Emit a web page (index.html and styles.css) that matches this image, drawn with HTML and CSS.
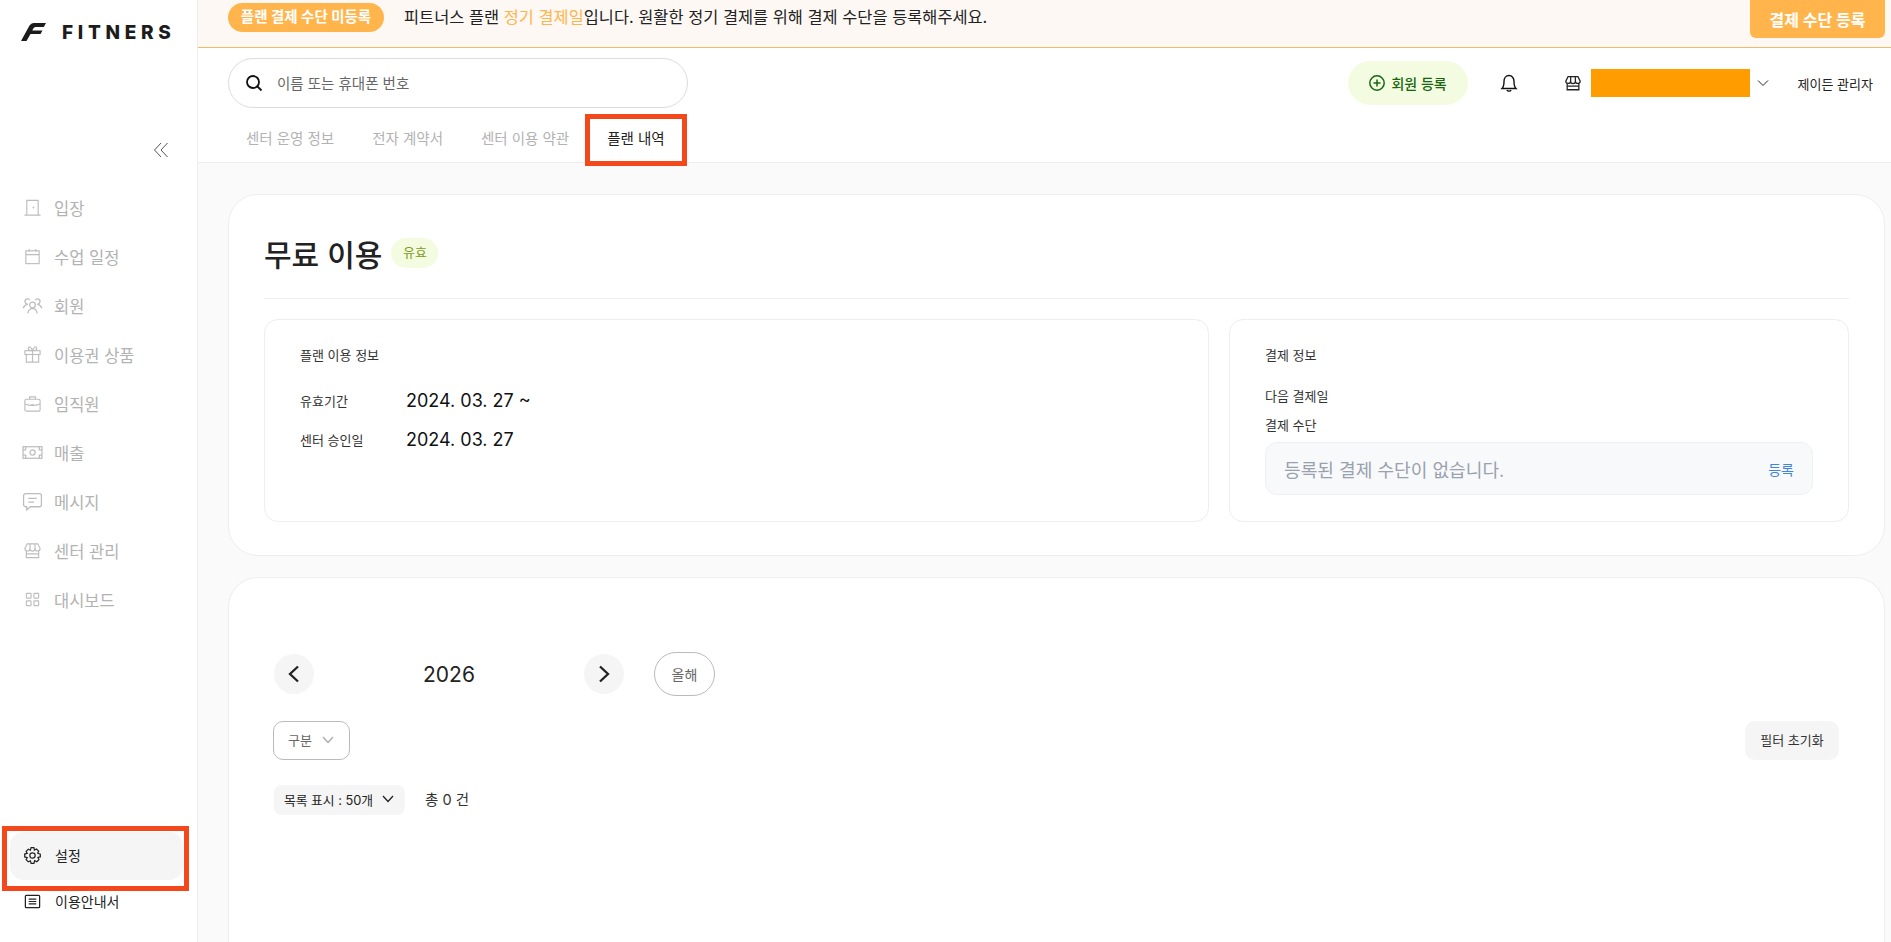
FILE: index.html
```html
<!DOCTYPE html>
<html lang="ko">
<head>
  <meta charset="UTF-8" />
  <title>피트너스 - 플랜 내역</title>
  <link rel="stylesheet" href="styles.css">
</head>
<body>

  <aside class="sidebar">
    <div class="logo">
      <svg class="logoMark" width="25" height="18" viewBox="0 0 25 18"><path d="M0 18L8.500 2.500Q10 0 12.500 0H25L22.800 4H14.500Q13 4 12.300 5.500L11.300 7.500H21.500L19.500 11H9.500L5.500 18Z" fill="#1c1c1c"/></svg>
      <span class="logoText">FITNERS</span>
    </div>
    <div class="collapse">
      <svg width="16" height="16" viewBox="0 0 16 16" fill="none" stroke="#555" stroke-width="1"><path d="M8 1L1.500 8L8 15M14.500 1L8 8L14.500 15"/></svg>
    </div>
    <nav class="nav">
      <div class="navItem">
        <svg class="navIcon" viewBox="0 0 20 20"><path d="M4 18V2.500H16V18M1.500 18H18.500"/><circle cx="11" cy="10" r=".4"/></svg>
        입장
      </div>
      <div class="navItem">
        <svg class="navIcon" viewBox="0 0 20 20"><rect x="3" y="4" width="14" height="13.500"/><path d="M3 8H17M6.500 2V5M13.500 2V5"/></svg>
        수업 일정
      </div>
      <div class="navItem">
        <svg class="navIcon wide" viewBox="0 0 20 20"><circle cx="10" cy="9.500" r="2.700"/><path d="M5.500 17.500C6 14.500 8 13 10 13S14 14.500 14.500 17.500"/><path d="M7.300 5A2.400 2.400 0 1 0 5.500 8.600C3.500 8.900 2 10.200 1 12.500M12.700 5A2.400 2.400 0 1 1 14.500 8.600C16.500 8.900 18 10.200 19 12.500"/></svg>
        회원
      </div>
      <div class="navItem">
        <svg class="navIcon" viewBox="0 0 20 20"><rect x="2" y="6" width="16" height="4"/><path d="M3.500 10V18H16.500V10M10 6V18M10 6C7 6 5 5 5.500 3S9 2 10 6C11 2 14 1 14.500 3S13 6 10 6Z"/></svg>
        이용권 상품
      </div>
      <div class="navItem">
        <svg class="navIcon" viewBox="0 0 20 20"><rect x="2" y="5.500" width="16" height="12.500" rx="1.500"/><path d="M7 5.500V3H13V5.500M2 10.500C7 12.500 13 12.500 18 10.500M8.500 11.500H11.500"/></svg>
        임직원
      </div>
      <div class="navItem">
        <svg class="navIcon wide" viewBox="0 0 20 20"><rect x="1" y="4.500" width="18" height="11"/><circle cx="10" cy="10" r="2.500"/><path d="M1 7.500H3.500V4.500M16.500 4.500V7.500H19M1 12.500H3.500V15.500M16.500 15.500V12.500H19"/></svg>
        매출
      </div>
      <div class="navItem">
        <svg class="navIcon wide" viewBox="0 0 20 20"><path d="M3.500 2.500H16.500A2 2 0 0 1 18.500 4.500V13A2 2 0 0 1 16.500 15H8L4.500 18V15H3.500A2 2 0 0 1 1.500 13V4.500A2 2 0 0 1 3.500 2.500Z"/><path d="M6 7H14M6 10.500H11.500"/></svg>
        메시지
      </div>
      <div class="navItem">
        <svg class="navIcon" viewBox="0 0 20 20"><path d="M4.500 3H15.500L18 8A2.670 2.670 0 0 1 12.670 8A2.670 2.670 0 0 1 7.330 8A2.670 2.670 0 0 1 2 8ZM7.500 3L7.330 8M12.500 3L12.670 8M3.500 10.500V17.500H16.500V10.500M3.500 13.500H16.500"/></svg>
        센터 관리
      </div>
      <div class="navItem">
        <svg class="navIcon" viewBox="0 0 20 20"><rect x="3.500" y="3.500" width="5" height="5" rx=".8"/><rect x="11.500" y="3.500" width="5" height="5" rx=".8"/><rect x="3.500" y="11.500" width="5" height="5" rx=".8"/><rect x="11.500" y="11.500" width="5" height="5" rx=".8"/></svg>
        대시보드
      </div>
    </nav>
    <div class="sideFooter">
      <div class="footItem active">
        <svg class="footIcon" viewBox="0 0 20 20"><circle cx="10" cy="10" r="2.800"/><path d="M8.500 1.800H11.500L12 4.300L14.200 3.100L16.500 5.400L15.500 7.600L18.200 8.500V11.500L15.700 12.100L16.800 14.300L14.500 16.600L12.200 15.500L11.500 18.200H8.500L7.800 15.600L5.600 16.700L3.300 14.400L4.400 12.200L1.800 11.500V8.500L4.400 7.800L3.300 5.600L5.600 3.300L7.800 4.400Z"/></svg>
        설정
      </div>
      <div class="footItem guide">
        <svg class="footIcon" viewBox="0 0 20 20"><rect x="2.500" y="3.500" width="15" height="13" rx="1"/><path d="M6 7.500H14M6 10H14M6 12.500H14"/></svg>
        이용안내서
      </div>
    </div>
    <div class="markBox markSetting"></div>
  </aside>

  <div class="main">
    <div class="banner">
      <span class="bannerPill">플랜 결제 수단 미등록</span>
      <span class="bannerText">피트너스 플랜 <em>정기 결제일</em>입니다. 원활한 정기 결제를 위해 결제 수단을 등록해주세요.</span>
      <button class="bannerBtn">결제 수단 등록</button>
    </div>

    <header class="header">
      <div class="headerTop">
        <div class="search">
          <svg width="20" height="20" viewBox="0 0 20 20" fill="none" stroke="#111" stroke-width="1.800"><circle cx="9" cy="9" r="6"/><path d="M13.500 13.500L17.500 17.500"/></svg>
          <span>이름 또는 휴대폰 번호</span>
        </div>
        <button class="addMember">
          <svg width="18" height="18" viewBox="0 0 18 18" fill="none" stroke="#17650f" stroke-width="1.500"><circle cx="9" cy="9" r="7.200"/><path d="M9 5.500V12.500M5.500 9H12.500"/></svg>
          회원 등록
        </button>
        <svg class="bell" width="20" height="20" viewBox="0 0 20 20" fill="none" stroke="#111" stroke-width="1.400"><path d="M3 15.500H17C15.500 14 15 13 15 8.500C15 5 13 2.500 10 2.500S5 5 5 8.500C5 13 4.500 14 3 15.500Z"/><path d="M8 17C8.500 18.500 11.500 18.500 12 17"/></svg>
        <svg class="store" width="18" height="18" viewBox="0 0 20 20" fill="none" stroke="#222" stroke-width="1.400"><path d="M4.500 3H15.500L18 8A2.670 2.670 0 0 1 12.670 8A2.670 2.670 0 0 1 7.330 8A2.670 2.670 0 0 1 2 8ZM7.500 3L7.330 8M12.500 3L12.670 8M3.500 10.500V17.500H16.500V10.500M3.500 13.500H16.500"/></svg>
        <div class="centerName"></div>
        <svg class="centerArrow" width="12" height="12" viewBox="0 0 12 12" fill="none" stroke="#222" stroke-width="1"><path d="M1 3.500L6 8.500L11 3.500"/></svg>
        <span class="adminName">제이든 관리자</span>
      </div>
      <div class="tabs">
        <div class="tab">센터 운영 정보</div>
        <div class="tab">전자 계약서</div>
        <div class="tab">센터 이용 약관</div>
        <div class="tab current">플랜 내역<span class="markBox markTab"></span></div>
      </div>
    </header>

    <div class="content">
      <section class="card planCard">
        <div class="planTitle">
          <h1>무료 이용</h1>
          <span class="statusBadge">유효</span>
        </div>
        <div class="panels">
          <div class="panel usePanel">
            <div class="panelTitle">플랜 이용 정보</div>
            <div class="infoRow">
              <span class="infoLabel">유효기간</span>
              <span class="infoValue">2024. 03. 27 ~</span>
            </div>
            <div class="infoRow">
              <span class="infoLabel">센터 승인일</span>
              <span class="infoValue">2024. 03. 27</span>
            </div>
          </div>
          <div class="panel payPanel">
            <div class="panelTitle">결제 정보</div>
            <div class="payLabel nextPay">다음 결제일</div>
            <div class="payLabel">결제 수단</div>
            <div class="payField">
              <span>등록된 결제 수단이 없습니다.</span>
              <a class="payLink">등록</a>
            </div>
          </div>
        </div>
      </section>

      <section class="card listCard">
        <div class="yearRow">
          <button class="roundBtn">
            <svg width="18" height="18" viewBox="0 0 18 18" fill="none" stroke="#222" stroke-width="2.300"><path d="M13 1.500L5 9L13 16.500"/></svg>
          </button>
          <span class="yearText">2026</span>
          <button class="roundBtn">
            <svg width="18" height="18" viewBox="0 0 18 18" fill="none" stroke="#222" stroke-width="2.300"><path d="M5 1.500L13 9L5 16.500"/></svg>
          </button>
          <button class="thisYear">올해</button>
        </div>
        <div class="filterRow">
          <button class="filterBtn">구분
            <svg width="14" height="14" viewBox="0 0 14 14" fill="none" stroke="#aaa" stroke-width="1.300"><path d="M2 4L7 9.500L12 4"/></svg>
          </button>
          <button class="resetBtn">필터 초기화</button>
        </div>
        <div class="listRow">
          <button class="sizeBtn">목록 표시 : 50개
            <svg width="14" height="14" viewBox="0 0 14 14" fill="none" stroke="#222" stroke-width="1.300"><path d="M2 4L7 9.500L12 4"/></svg>
          </button>
          <span class="totalText">총 0 건</span>
        </div>
      </section>
    </div>
  </div>

</body>
</html>
```

FILE: styles.css
```css
* {
  box-sizing: border-box;
}

html, body {
  height: 100%;
}

body {
  margin: 0;
  display: flex;
  height: 942px;
  overflow: hidden;
  font-family: 'Inter', 'Noto Sans CJK KR', sans-serif;
  color: #222;
  background-color: #fff;
}

button {
  font-family: inherit;
  border: none;
  background: none;
  padding: 0;
  cursor: pointer;
}

/* 빨간 표시 박스 */
.markBox {
  position: absolute;
  border: 5px solid #f2481b;
  pointer-events: none;
}

.markSetting {
  left: 2px;
  top: 826px;
  width: 187px;
  height: 65px;
}

.markTab {
  left: -3px;
  top: -10px;
  width: 102px;
  height: 52px;
}

/* 사이드바 */
.sidebar {
  position: relative;
  flex: 0 0 198px;
  display: flex;
  flex-direction: column;
  border-right: 1px solid #eee;
  background-color: #fff;
}

.logo {
  display: flex;
  align-items: center;
  gap: 16px;
  height: 22px;
  margin: 21px 0 0 21px;
}

.logoText {
  font-size: 19px;
  font-weight: 800;
  letter-spacing: 4.700px;
  color: #1c1c1c;
}

.collapse {
  display: flex;
  justify-content: flex-end;
  height: 20px;
  margin-top: 97px;
  padding: 2px 28px 0 0;
}

.nav {
  margin-top: 23px;
}

.navItem {
  display: flex;
  align-items: center;
  gap: 12px;
  height: 49px;
  padding-left: 23px;
  font-size: 16.500px;
  color: #b2b2b2;
}

.navIcon {
  width: 19px;
  height: 19px;
  fill: none;
  stroke: #bdbdbd;
  stroke-width: 1.200;
}

.navIcon.wide {
  width: 21px;
  height: 21px;
  margin: 0 -1px;
}

.sideFooter {
  margin-top: auto;
  padding: 0 14px 18px 10px;
}

.footItem {
  display: flex;
  align-items: center;
  gap: 13px;
  height: 48px;
  padding: 0 0 2px 13px;
  font-size: 14px;
  color: #222;
  border-radius: 14px;
}

.footItem.active {
  background-color: #f5f5f5;
}

.footItem.guide {
  height: 44px;
}

.footIcon {
  width: 19px;
  height: 19px;
  fill: none;
  stroke: #222;
  stroke-width: 1.300;
}

/* 메인 */
.main {
  flex: 1;
  min-width: 0;
  display: flex;
  flex-direction: column;
}

.banner {
  display: flex;
  align-items: flex-start;
  height: 48px;
  padding: 3px 6px 0 30px;
  background-color: #fdf8f4;
  border-bottom: 1px solid #f0bb68;
}

.bannerPill {
  width: 156px;
  height: 29px;
  line-height: 28px;
  text-align: center;
  border-radius: 15px;
  font-size: 14.500px;
  font-weight: 700;
  color: #fff;
  background-color: #ffb54c;
}

.bannerText {
  margin-left: 20px;
  line-height: 29px;
  font-size: 16.400px;
  color: #222;
}

.bannerText em {
  font-style: normal;
  color: #ffb54c;
}

.bannerBtn {
  margin: -3px 0 0 auto;
  width: 135px;
  height: 38px;
  border-radius: 0 0 6px 6px;
  font-size: 16px;
  font-weight: 700;
  color: #fff;
  background-color: #ffb54c;
}

.header {
  height: 115px;
  border-bottom: 1px solid #eee;
  background-color: #fff;
}

.headerTop {
  display: flex;
  align-items: center;
  height: 50px;
  margin-top: 10px;
  padding: 0 18px 0 30px;
}

.search {
  display: flex;
  align-items: center;
  gap: 13px;
  width: 460px;
  height: 50px;
  padding: 0 0 1px 15px;
  border: 1px solid #dcdcdc;
  border-radius: 25px;
  font-size: 14.500px;
  color: #666;
}

.addMember {
  display: flex;
  align-items: center;
  justify-content: center;
  gap: 5px;
  width: 120px;
  height: 44px;
  margin-left: auto;
  border-radius: 22px;
  font-size: 14px;
  font-weight: 500;
  color: #17650f;
  background-color: #f3fce0;
}

.bell {
  margin-left: 31px;
}

.store {
  margin: 0 -1px 0 45px;
}

.centerName {
  width: 159px;
  height: 28px;
  margin-left: 10px;
  background-color: #ff9d00;
}

.centerArrow {
  margin-left: 7px;
}

.adminName {
  margin-left: 29px;
  font-size: 13px;
  color: #222;
}

.tabs {
  display: flex;
  margin: 16px 0 0 29px;
}

.tab {
  position: relative;
  padding: 0 19px;
  line-height: 30px;
  font-size: 14.500px;
  color: #b2b2b2;
}

.tab.current {
  color: #222;
}

.content {
  flex: 1;
  min-height: 0;
  display: flex;
  flex-direction: column;
  gap: 21px;
  padding: 31px 6px 0 30px;
  background-color: #fafafa;
}

.card {
  background-color: #fff;
  border: 1px solid #eee;
  border-radius: 30px;
}

.planCard {
  flex: 0 0 362px;
  padding: 0 35px;
}

.planTitle {
  display: flex;
  align-items: center;
  gap: 9px;
  height: 104px;
  padding-top: 12px;
  border-bottom: 1px solid #eee;
}

.planTitle h1 {
  margin: 0;
  font-size: 30px;
  font-weight: 500;
  color: #222;
}

.statusBadge {
  width: 47px;
  height: 30px;
  line-height: 29px;
  text-align: center;
  border-radius: 15px;
  font-size: 13px;
  color: #7d9c1c;
  background-color: #f3fce0;
}

.panels {
  display: flex;
  gap: 20px;
  margin-top: 20px;
}

.panel {
  height: 203px;
  border: 1px solid #eee;
  border-radius: 14px;
  padding: 25px 35px;
}

.usePanel {
  flex: 0 0 945px;
}

.payPanel {
  flex: 1;
}

.panelTitle {
  line-height: 20px;
  font-size: 13px;
  color: #333;
}

.infoRow {
  display: flex;
  align-items: center;
  height: 39px;
}

.panelTitle + .infoRow {
  margin-top: 16px;
}

.infoLabel {
  width: 106px;
  font-size: 13px;
  color: #333;
}

.infoValue {
  font-size: 18px;
  color: #111;
}

.payLabel {
  line-height: 20px;
  font-size: 13px;
  color: #333;
}

.nextPay {
  margin: 21px 0 9px;
}

.payField {
  display: flex;
  align-items: center;
  justify-content: space-between;
  height: 53px;
  margin-top: 7px;
  padding: 0 18px;
  border: 1px solid #eef0f3;
  border-radius: 12px;
  font-size: 18.100px;
  color: #98a1ad;
  background-color: #f8f9fb;
}

.payLink {
  font-size: 14px;
  color: #3f86dc;
}

.listCard {
  flex: 1;
  border-bottom: none;
  border-radius: 30px 30px 0 0;
  padding: 74px 45px 0 45px;
}

.yearRow {
  display: flex;
  align-items: center;
}

.roundBtn {
  display: flex;
  align-items: center;
  justify-content: center;
  width: 40px;
  height: 40px;
  border-radius: 50%;
  background-color: #f5f5f5;
}

.yearText {
  width: 270px;
  text-align: center;
  font-size: 21px;
  color: #222;
}

.thisYear {
  width: 61px;
  height: 44px;
  margin-left: 30px;
  border: 1px solid #bbb;
  border-radius: 22px;
  font-size: 14px;
  color: #666;
}

.filterRow {
  display: flex;
  justify-content: space-between;
  align-items: center;
  margin-top: 25px;
}

.filterBtn {
  display: flex;
  align-items: center;
  justify-content: center;
  gap: 9px;
  width: 77px;
  height: 39px;
  margin-left: -1px;
  padding-bottom: 2px;
  border: 1px solid #bbb;
  border-radius: 10px;
  font-size: 13px;
  color: #666;
}

.resetBtn {
  width: 94px;
  height: 39px;
  padding-bottom: 2px;
  border-radius: 10px;
  font-size: 13px;
  color: #333;
  background-color: #f5f5f5;
}

.listRow {
  display: flex;
  align-items: center;
  gap: 20px;
  margin-top: 25px;
}

.sizeBtn {
  display: flex;
  align-items: center;
  justify-content: center;
  gap: 8px;
  width: 131px;
  height: 30px;
  padding-bottom: 2px;
  border-radius: 8px;
  font-size: 12.800px;
  color: #222;
  background-color: #f5f5f5;
}

.totalText {
  padding-bottom: 3px;
  font-size: 14.500px;
  color: #333;
}
```
